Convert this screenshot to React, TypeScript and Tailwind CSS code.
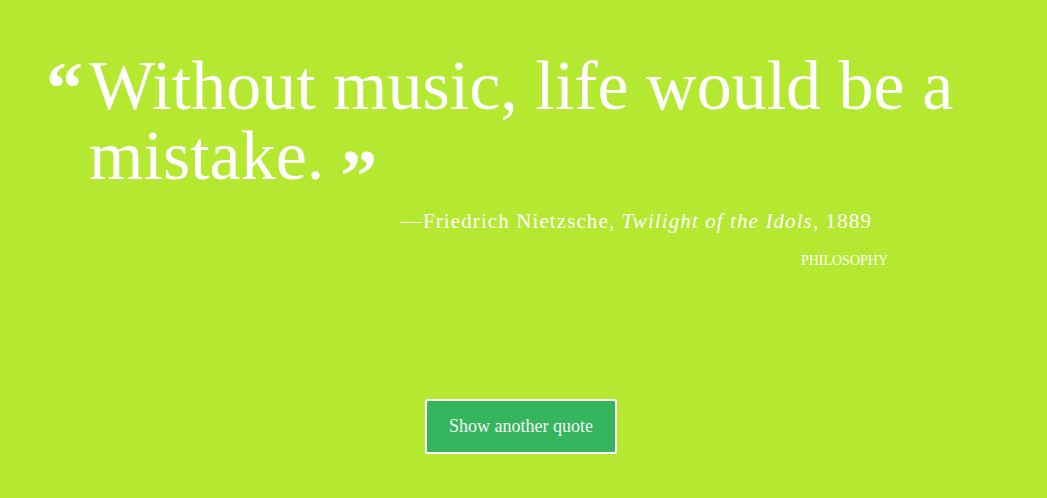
export default function App() {
  return (
    <div className="min-h-[498px] w-full bg-[#b5e830] text-white font-['Liberation_Serif',serif]">
      <div className="pl-[46px] pt-[51px]">
        {/* Quote */}
        <div className="flex items-start">
          <span className="w-[43px] shrink-0 text-[74px] font-bold leading-[70px] mt-[2px]">“</span>
          <p className="w-[900px] text-[70px] leading-[70px]">
            Without music, life would be a mistake.
            <span className="relative top-[22px] ml-[16px] text-[74px] font-bold leading-[0]">”</span>
          </p>
        </div>

        <div className="w-[842px]">
          {/* Attribution */}
          <p className="mt-[16px] pr-[16px] text-right text-[21px] leading-[28px] tracking-[1.1px]">
            —Friedrich Nietzsche, <em>Twilight of the Idols</em>, 1889
          </p>
          <p className="mt-[16px] text-right text-[14px] leading-[20px] uppercase">Philosophy</p>
        </div>
      </div>

      {/* Action */}
      <div className="flex justify-center pt-[128px] pr-[5px]">
        <button className="h-[55px] w-[192px] rounded-[3px] border-2 border-white bg-[#36b55f] text-[18px] text-[#f4f4f4]">
          Show another quote
        </button>
      </div>
    </div>
  );
}
